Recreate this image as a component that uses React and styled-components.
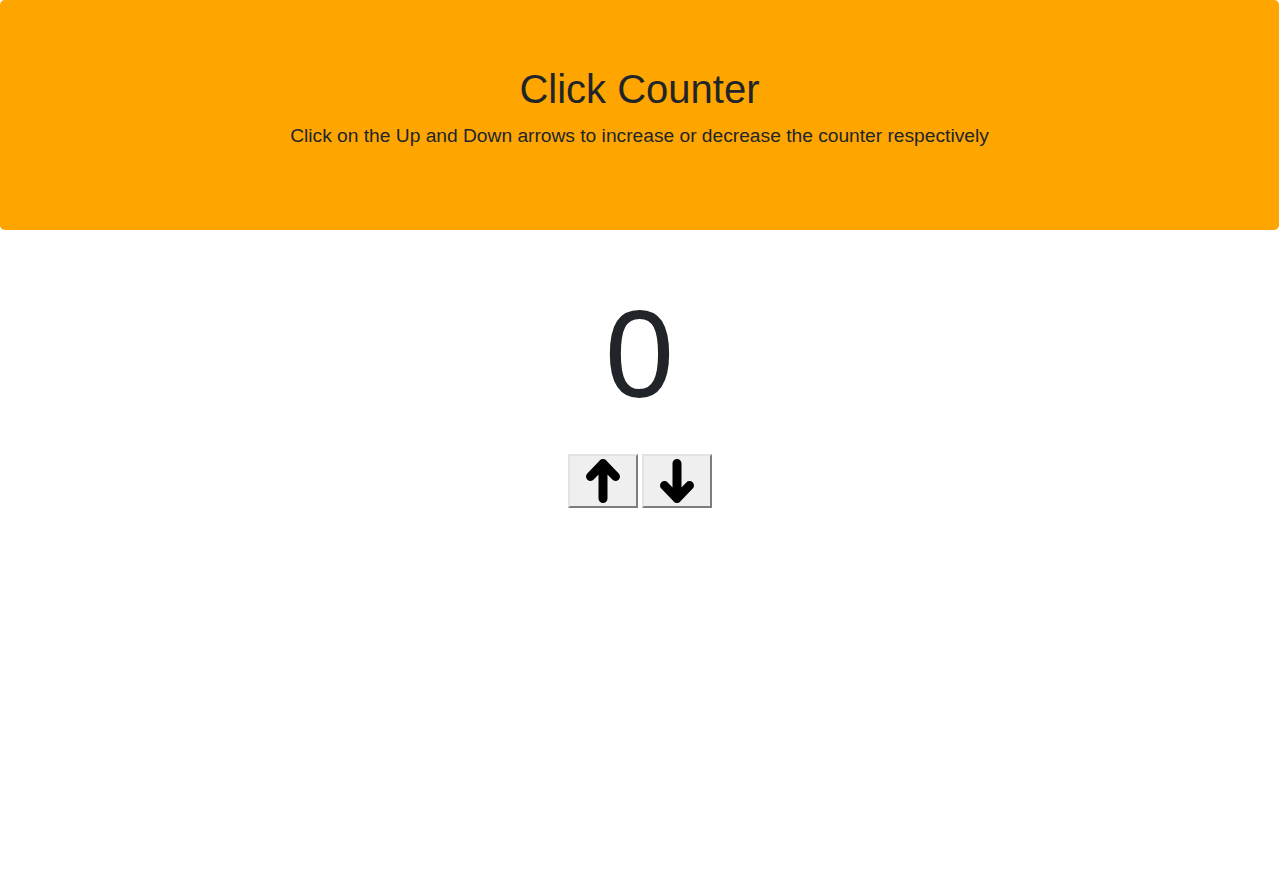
import React, { useState } from "react";
import styled, { createGlobalStyle } from "styled-components";

const Global = createGlobalStyle`
  html, body { margin: 0; padding: 0; background: #fff; }
  body {
    font-family: "Liberation Sans", Arial, sans-serif;
    color: #212529;
  }
`;

const Jumbotron = styled.header`
  background: #ffa500;
  border-radius: 4.8px;
  padding: 65px 32px 63px;
  margin-bottom: 32px;
  text-align: center;
`;

const Title = styled.h1`
  margin: 0 0 8px;
  font-size: 40px;
  font-weight: 300;
  line-height: 1.2;
`;

const Lead = styled.p`
  margin: 0 0 16px;
  font-size: 19.2px;
  font-weight: 300;
  line-height: 30px;
`;

const CounterSection = styled.main`
  display: flex;
  flex-direction: column;
  align-items: center;
`;

const Count = styled.div`
  font-size: 124px;
  font-weight: 300;
  line-height: 1.2;
  margin-top: 18px;
  margin-bottom: 25px;
`;

const Buttons = styled.div`
  display: flex;
  gap: 4px;
`;

const ArrowButton = styled.button`
  width: 70px;
  height: 54px;
  padding: 0;
  display: flex;
  align-items: center;
  justify-content: center;
  background: #efefef;
  border: 2px solid;
  border-color: #e3e3e3 #7d7d7d #7d7d7d #e3e3e3;
  cursor: pointer;
`;

const Arrow = ({ up }) => (
  <svg width="34" height="44" viewBox="0 0 34 44" fill="none" stroke="#000" strokeWidth="9" strokeLinecap="round" strokeLinejoin="round">
    {up ? (
      <path d="M17 39.5V4.5M4.5 17.5 17 4.5l12.5 13" />
    ) : (
      <path d="M17 4.5v35M4.5 26.5 17 39.5l12.5-13" />
    )}
  </svg>
);

export default function App() {
  const [count, setCount] = useState(0);
  return (
    <>
      <Global />
      <Jumbotron>
        <Title>Click Counter</Title>
        <Lead>Click on the Up and Down arrows to increase or decrease the counter respectively</Lead>
      </Jumbotron>
      <CounterSection>
        <Count>{count}</Count>
        <Buttons>
          <ArrowButton onClick={() => setCount((c) => c + 1)} aria-label="Increase">
            <Arrow up />
          </ArrowButton>
          <ArrowButton onClick={() => setCount((c) => c - 1)} aria-label="Decrease">
            <Arrow />
          </ArrowButton>
        </Buttons>
      </CounterSection>
    </>
  );
}
